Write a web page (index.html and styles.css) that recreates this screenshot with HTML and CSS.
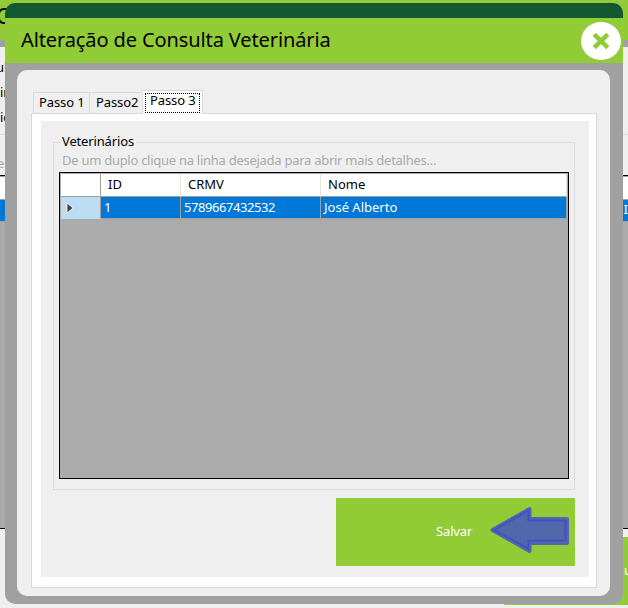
FILE: index.html
```html
<!DOCTYPE html>
<html lang="pt-BR">
<head>
<meta charset="utf-8">
<title>Alteração de Consulta Veterinária</title>
<link rel="stylesheet" href="styles.css">
</head>
<body>
<div class="backdrop">
  <div class="back-header"><span>C</span></div>
  <div class="back-strip"></div>
  <div class="back-form">
    <div class="back-labels"><span class="l1">ul</span><span class="l2">in</span><span class="l3">ic</span></div>
    <div class="back-hint">e</div>
    <div class="back-grid"><div class="back-grid-head"></div><div class="back-grid-row"><span>I</span></div></div>
    <div class="back-button"><span>u</span></div>
  </div>
</div>
<main class="dialog">
  <div class="title-strip"></div>
  <header class="title-bar">
    <h1>Alteração de Consulta Veterinária</h1>
    <button class="close" aria-label="Fechar">
      <svg width="40" height="38" viewBox="0 0 40 38"><ellipse cx="20" cy="19" rx="20" ry="19" fill="#fff"/><path d="M13.2 12.4L26.8 25.6M26.8 12.4L13.2 25.6" stroke="#91cc36" stroke-width="4.6"/></svg>
    </button>
  </header>
  <div class="frame">
    <section class="panel">
      <nav class="tabs"><div class="tab first"><span>Passo 1</span></div><div class="tab second"><span>Passo2</span></div><div class="tab active"><span>Passo 3</span></div></nav>
      <div class="page">
        <div class="content">
          <div class="group">
            <div class="legend"><span>Veterinários</span></div>
            <div class="hint"><span>De um duplo clique na linha desejada para abrir mais detalhes...</span></div>
            <div class="grid">
              <div class="row head"><div></div><div><span>ID</span></div><div><span>CRMV</span></div><div><span>Nome</span></div></div>
              <div class="row data"><div class="marker"><svg width="8" height="12" viewBox="0 0 8 12"><path d="M1 1L7 6L1 11Z" fill="#404040" stroke="#fff" stroke-width=".8"/></svg></div><div><span>1</span></div><div><span class="num">5789667432532</span></div><div><span>José Alberto</span></div></div>
            </div>
          </div>
          <button class="save"><span>Salvar</span>
            <svg class="arrow" width="80" height="48" viewBox="0 0 80 48"><path d="M2.5 24L39.5 3V13H77V37H39.5V45Z" fill="#5368aa" stroke="#5368aa" stroke-width="4" stroke-linejoin="round"/><path d="M4 24L38.5 4.5V14.5H75.5V34.5H38.5V43Z" fill="none" stroke="#454fc7" stroke-width="2"/></svg>
          </button>
        </div>
      </div>
    </section>
  </div>
</main>
</body>
</html>
```
FILE: styles.css
```css
* { box-sizing: border-box; }
body { margin: 0; width: 628px; height: 608px; overflow: hidden; position: relative; background: #efefef; color: #000; font: 13px/18px "Noto Sans", sans-serif; }
button { border: 0; padding: 0; font: inherit; }
span { white-space: nowrap; }

.backdrop { height: 608px; overflow: hidden; }
.back-header { height: 40px; background: #91cc36; font-size: 21px; line-height: 33px; }
.back-header span { margin-left: -4px; }
.back-strip { height: 7px; background: #a0a0a0; }
.back-labels { height: 88px; padding-top: 11px; border-bottom: 1px solid #dcdcdc; display: flex; flex-direction: column; gap: 7px; }
.back-labels .l1 { margin-left: -4px; }
.back-hint { height: 40px; padding-top: 19px; color: #aaa; margin-left: -3px; }
.back-grid { height: 354px; border-top: 1px solid #000; border-bottom: 1px solid #000; background: #ababab; }
.back-grid-head { height: 23px; border-top: 1px solid #a0a0a0; background: #fff; }
.back-grid-row { height: 23px; border: solid #a0a0a0; border-width: 1px 0; background: #0078d7; color: #fff; text-align: right; }
.back-button { margin: 8px 0 0 504px; height: 68px; background: #91cc36; color: #fff; text-align: right; padding-top: 24px; }
.back-button span { margin-right: -4px; }

.dialog { position: absolute; left: 5px; top: 3px; width: 618px; height: 601px; border-radius: 10px; overflow: hidden; background: #a0a0a0; }
.title-strip { height: 15px; background: #125930; }
.title-bar { height: 45px; background: #91cc36; display: flex; justify-content: space-between; align-items: flex-start; padding: 4px 2px 0 16px; }
h1 { margin: 3px 0 0; font-size: 20px; line-height: 30px; font-weight: 400; letter-spacing: -.11px; white-space: nowrap; }
.close { width: 40px; height: 38px; background: none; }
svg { display: block; }
.frame { padding: 7px 13px 8px 12px; }
.panel { height: 526px; padding: 20px 13px 7px 14px; border-radius: 10px; background: #efefef; }
.tabs { height: 23px; display: flex; align-items: flex-end; padding-left: 2px; }
.tab { height: 21px; border: 1px solid #d9d9d9; border-bottom: 0; line-height: 19px; padding-left: 5px; letter-spacing: -.1px; }
.first { width: 57px; }
.second { width: 52px; border-left: 0; border-right: 0; padding-left: 6px; }
.tab.active { width: 61px; height: 24px; margin-bottom: -1px; padding: 2px; background: #fff; position: relative; z-index: 1; }
.active span { display: block; width: 55px; height: 20px; border: 1px dotted #000; line-height: 13px; padding-left: 4px; }
.page { height: 475px; border: 1px solid #d9d9d9; background: #fff; padding: 7px 7px 10px 9px; }
.content { height: 456px; background: #efefef; padding: 21px 14px 11px 12px; }
.group { height: 348px; border: 1px solid #dcdcdc; padding: 0 5px; }
.legend { height: 9px; margin-left: 1px; display: flex; align-items: flex-start; }
.legend span { background: #efefef; margin-top: -11px; padding: 0 2px; letter-spacing: -.15px; }
.hint { height: 20px; padding-left: 3px; color: #aaa; line-height: 16px; letter-spacing: -.27px; }
.grid { width: 510px; height: 307px; border: 1px solid #000; background: #ababab; padding: 1px 1px 0; }
.row { display: grid; grid-template-columns: 40px 80px 140px 246px; }
.row > div { height: 22px; border-right: 1px solid #a0a0a0; border-bottom: 1px solid #a0a0a0; }
.head > div { height: 23px; background: #fff; border-right-color: #e5e5e5; padding-left: 7px; line-height: 21px; }
.head > div:first-child { border-right-color: #a0a0a0; }
.data > div { background: #0078d7; color: #fff; padding-left: 3px; line-height: 21px; }
.data > .marker { background: #bcdcf4; padding: 5px 0 0 5px; border-bottom-color: #bcdcf4; }
.num { letter-spacing: -.43px; }
.save { display: flex; align-items: center; width: 239px; height: 68px; margin: 8px 0 0 auto; padding: 0 0 2px 100px; background: #91cc36; color: #fff; letter-spacing: -.15px; position: relative; }
.arrow { position: absolute; left: 154px; top: 8px; }
```
